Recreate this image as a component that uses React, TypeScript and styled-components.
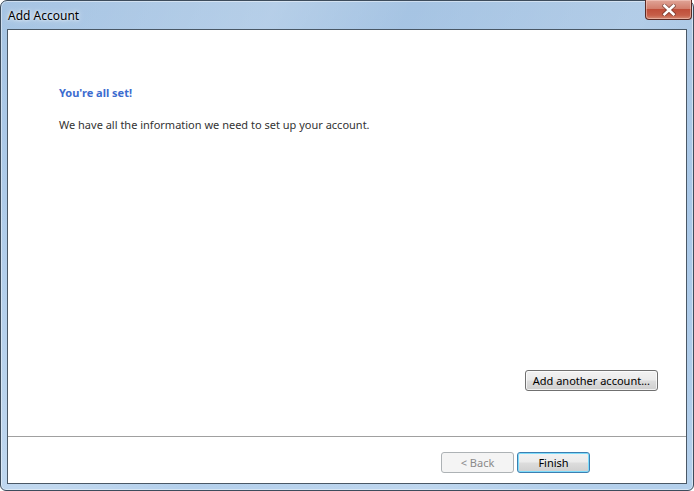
import * as React from 'react'
import styled, { createGlobalStyle } from 'styled-components'

const GlobalStyle = createGlobalStyle`
  html, body {
    margin: 0;
    padding: 0;
    background: #ffffff;
  }
  body {
    font-family: "Segoe UI", "Noto Sans", "Open Sans", sans-serif;
  }
`

const uiFont = `"Segoe UI", "Noto Sans", "Open Sans", sans-serif`

function CloseGlyph() {
  return (
    <svg width="14" height="12" viewBox="0 0 14 12">
      <path
        d="M2.5 1.8 L11.5 10.2 M11.5 1.8 L2.5 10.2"
        fill="none"
        stroke="#4a2620"
        strokeWidth="4.4"
        strokeLinecap="square"
        opacity="0.5"
      />
      <path
        d="M2.5 1.8 L11.5 10.2 M11.5 1.8 L2.5 10.2"
        fill="none"
        stroke="#ffffff"
        strokeWidth="2.6"
        strokeLinecap="square"
      />
    </svg>
  )
}

function App() {
  return (
    <>
      <GlobalStyle />
      <Frame>
        <TitleBar>
          <Title>Add Account</Title>
          <CloseButton aria-label="Close">
            <CloseGlyph />
          </CloseButton>
        </TitleBar>
        <Client>
          <Content>
            <Heading>You're all set!</Heading>
            <Message>
              We have all the information we need to set up your account.
            </Message>
            <Spacer />
            <ExtraRow>
              <Button>Add another account...</Button>
            </ExtraRow>
          </Content>
          <Footer>
            <Button disabled>&lt; Back</Button>
            <Button isDefault>Finish</Button>
          </Footer>
        </Client>
      </Frame>
    </>
  )
}

const Frame = styled.div`
  box-sizing: border-box;
  width: 694px;
  height: 491px;
  display: flex;
  flex-direction: column;
  padding: 0 6px 6px 6px;
  border: 1px solid #3d4c5c;
  border-radius: 7px 7px 6px 6px;
  background:
    linear-gradient(
      115deg,
      rgba(255, 255, 255, 0) 0%,
      rgba(255, 255, 255, 0.18) 30%,
      rgba(255, 255, 255, 0) 45%,
      rgba(255, 255, 255, 0.14) 70%,
      rgba(255, 255, 255, 0) 85%
    ),
    linear-gradient(180deg, #a6c4e3 0%, #a9c8e8 40%, #b4d0ec 100%);
  box-shadow: inset 0 0 0 1px rgba(255, 255, 255, 0.45);
`

const TitleBar = styled.div`
  height: 28px;
  display: flex;
  align-items: flex-start;
  justify-content: space-between;
`

const Title = styled.div`
  font-family: ${uiFont};
  font-size: 12px;
  color: #000000;
  padding: 6px 0 0 1px;
  text-shadow: 0 0 6px rgba(255, 255, 255, 0.9), 0 0 3px rgba(255, 255, 255, 0.9);
`

const CloseButton = styled.button`
  box-sizing: border-box;
  width: 47px;
  height: 20px;
  margin: -1px -5px 0 0;
  padding: 0;
  display: flex;
  align-items: center;
  justify-content: center;
  border: 1px solid #5a2a24;
  border-top: none;
  border-radius: 0 0 4px 4px;
  background: linear-gradient(
    180deg,
    #e0a497 0%,
    #d27f6d 45%,
    #bf4f3a 50%,
    #c65e48 80%,
    #d48b74 100%
  );
  box-shadow: inset 0 0 0 1px rgba(255, 220, 210, 0.45);
`

const Client = styled.div`
  flex: 1;
  display: flex;
  flex-direction: column;
  background: #ffffff;
  border: 1px solid #4a5866;
`

const Content = styled.div`
  flex: 1;
  display: flex;
  flex-direction: column;
  padding: 55px 28px 0 51px;
`

const Heading = styled.div`
  font-family: ${uiFont};
  font-size: 11px;
  font-weight: bold;
  color: #3c6ccf;
  line-height: 16px;
`

const Message = styled.div`
  font-family: ${uiFont};
  font-size: 11px;
  color: #333333;
  line-height: 16px;
  margin-top: 16px;
`

const Spacer = styled.div`
  flex: 1;
`

const ExtraRow = styled.div`
  display: flex;
  justify-content: flex-end;
  margin-bottom: 45px;
`

const Footer = styled.div`
  height: 47px;
  box-sizing: border-box;
  display: flex;
  justify-content: flex-end;
  gap: 3px;
  padding: 15px 96px 0 0;
  border-top: 1px solid #a0a0a0;
  margin: 0;
`

const Button = styled.button<{ isDefault?: boolean }>`
  box-sizing: border-box;
  min-width: 73px;
  height: 21px;
  padding: 0 7px;
  font-family: ${uiFont};
  font-size: 11px;
  color: #000000;
  border: 1px solid ${(p) => (p.isDefault ? '#3c7fb1' : '#707070')};
  border-radius: 3px;
  background: linear-gradient(
    180deg,
    #f2f2f2 0%,
    #ebebeb 48%,
    #dddddd 52%,
    #cfcfcf 100%
  );
  box-shadow: ${(p) =>
    p.isDefault
      ? 'inset 0 0 0 1px #7fdcfb'
      : 'inset 0 0 0 1px rgba(255, 255, 255, 0.7)'};

  &:disabled {
    color: #8a8a8a;
    border-color: #adb2b5;
    background: #f4f4f4;
    box-shadow: none;
  }
`

export default App
